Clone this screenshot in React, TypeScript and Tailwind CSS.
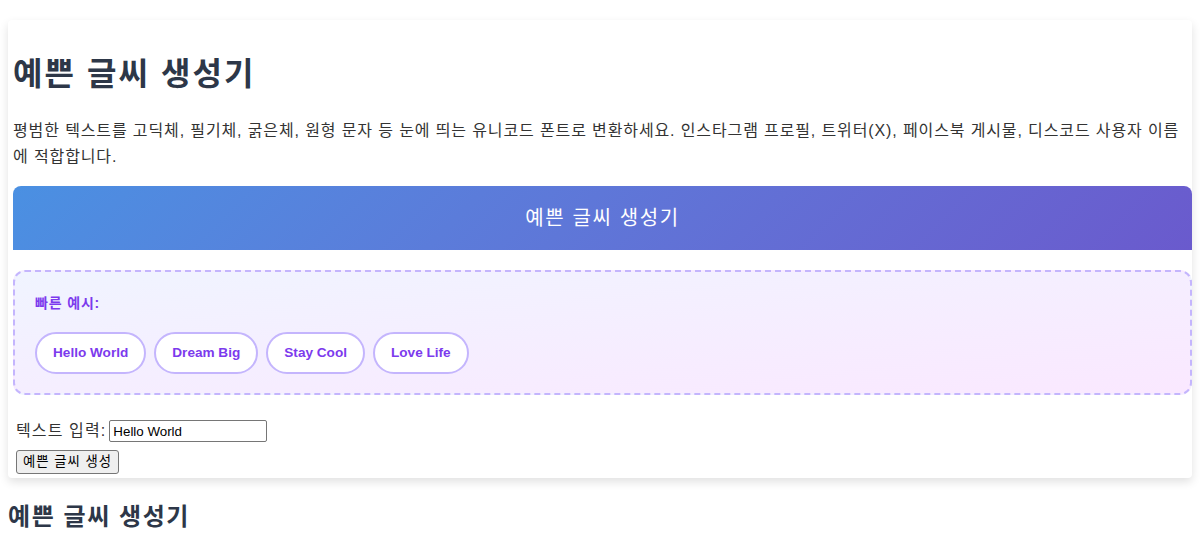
import { useState } from 'react';

const EXAMPLES = ['Hello World', 'Dream Big', 'Stay Cool', 'Love Life'];

const FONT = "font-['Liberation_Sans','Noto_Sans_CJK_KR',sans-serif]";

export default function App(): JSX.Element {
  const [text, setText] = useState('Hello World');

  return (
    <div className={`${FONT} bg-white px-2 pt-5 text-[#333]`}>
      <div className="rounded-sm bg-white pb-1 pl-[5px] shadow-[0_4px_10px_rgba(0,0,0,0.12)]">
        <h1 className="pt-[34px] pb-6 text-[32px] leading-10 font-bold tracking-[0.065em] text-[#2d3748]">
          예쁜 글씨 생성기
        </h1>
        <p className="text-base leading-[26px] tracking-[0.055em] text-[#333]">
          평범한 텍스트를 고딕체, 필기체, 굵은체, 원형 문자 등 눈에 띄는 유니코드 폰트로 변환하세요. 인스타그램 프로필, 트위터(X), 페이스북 게시물, 디스코드 사용자 이름에 적합합니다.
        </p>

        <div className="mt-4 flex h-16 items-center justify-center rounded-t-lg bg-linear-135 from-[#4a90e2] to-[#6a5acd] text-xl tracking-[0.08em] text-white">
          예쁜 글씨 생성기
        </div>

        <div className="mt-5 rounded-xl border-2 border-dashed border-[#c4b5fd] bg-gradient-to-br from-[#f0f4ff] to-[#fae8ff] px-5 pt-[21px] pb-[19px]">
          <div className="text-sm leading-[21px] font-bold tracking-[0.06em] text-[#7c3aed]">빠른 예시:</div>
          <div className="mt-[18px] flex gap-2">
            {EXAMPLES.map((ex) => (
              <button
                key={ex}
                onClick={() => setText(ex)}
                className="h-[42px] rounded-full border-2 border-[#c4b5fd] bg-white px-[16px] text-[13.6px] font-bold text-[#7c3aed]"
              >
                {ex}
              </button>
            ))}
          </div>
        </div>

        <div className="mt-6 pl-[3px]">
          <label className="flex items-center gap-[3px] text-base">
            <span className="tracking-[0.07em]">텍스트 입력:</span>
            <input
              value={text}
              onChange={(e) => setText(e.target.value)}
              className="h-[22px] w-[158px] rounded-[2px] border border-[#767676] px-[3px] text-[13.33px] text-black"
            />
          </label>
          <button className="mt-[7px] rounded-[3px] border border-[#767676] bg-[#efefef] px-[6px] py-px text-[13.33px] leading-5 tracking-[0.075em] text-black">
            예쁜 글씨 생성
          </button>
        </div>
      </div>

      <h2 className="pt-[23px] text-2xl leading-8 font-bold tracking-[0.065em] text-[#2d3748]">예쁜 글씨 생성기</h2>
    </div>
  );
}
